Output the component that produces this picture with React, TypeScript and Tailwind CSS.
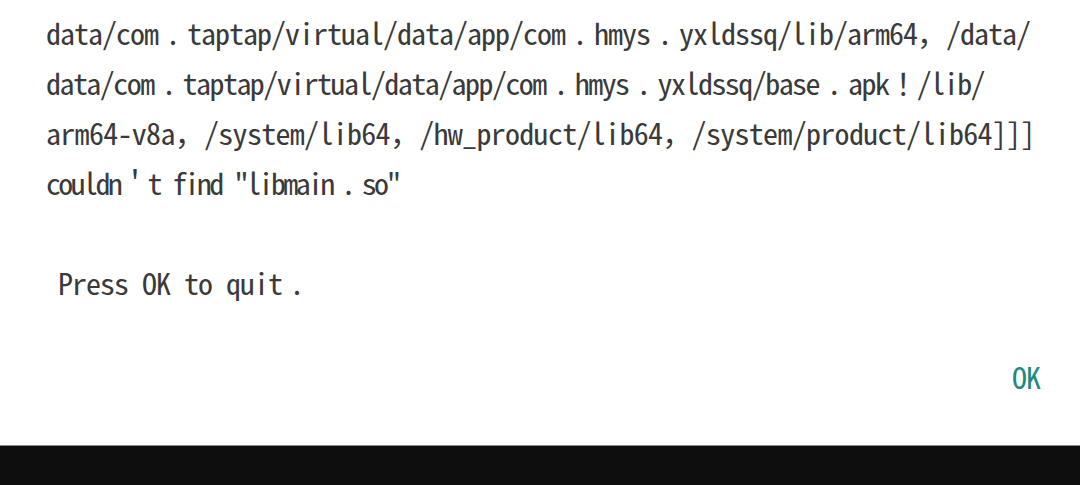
const mono = "font-['Noto_Sans_Mono_CJK_KR','Noto_Sans_Mono_CJK_SC',monospace]"

// dot in its own full-width cell, centred like the reference's punctuation
function Dot() {
  return <span className="inline-block w-[29px] text-center">.</span>
}

function Line({ parts, className }: { parts: string[]; className: string }) {
  return (
    <div className={className}>
      {parts.map((p, i) => (
        <span key={i}>
          {i > 0 && <Dot />}
          {p}
        </span>
      ))}
    </div>
  )
}

export default function App() {
  return (
    <div className="w-[1080px] h-[485px] flex flex-col bg-white overflow-hidden">
      <div className={`flex-1 flex flex-col px-[46px] pt-[7px] text-[30px] leading-[50px] text-[#3a3a3a] whitespace-pre ${mono}`}>
        <Line
          className="tracking-[-1px]"
          parts={['data/com', 'taptap/virtual/data/app/com', 'hmys', 'yxldssq/lib/arm64，/data/']}
        />
        <Line
          className="tracking-[-1.55px]"
          parts={['data/com', 'taptap/virtual/data/app/com', 'hmys', 'yxldssq/base', 'apk！/lib/']}
        />
        <Line
          className="tracking-[-0.7px]"
          parts={['arm64-v8a，/system/lib64，/hw_product/lib64，/system/product/lib64]]]']}
        />
        <Line className="tracking-[-2.65px]" parts={['couldn＇t find "libmain', 'so"']} />
        <div>&nbsp;</div>
        <Line className="tracking-[-1px] pl-[12px]" parts={['Press OK to quit', '']} />
        <div className="flex justify-end pt-[49px] mr-[-6px]">
          <button className="text-[30px] leading-[40px] tracking-[-1px] text-[#1f8a7f]">OK</button>
        </div>
      </div>
      <div className="h-[40px] bg-[#0e0e0e] border-t border-[#8a8a8a]" />
    </div>
  )
}
